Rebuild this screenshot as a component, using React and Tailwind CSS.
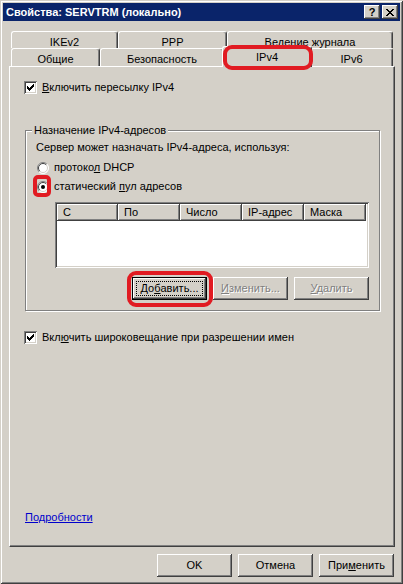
import React from "react";

const FONT = "font-['Liberation_Sans',Arial,sans-serif]";
const raised =
  "shadow-[inset_-1px_-1px_0_#404040,inset_1px_1px_0_#ffffff,inset_-2px_-2px_0_#808080,inset_2px_2px_0_#d4d0c8]";
const sunken =
  "shadow-[inset_1px_1px_0_#808080,inset_-1px_-1px_0_#ffffff,inset_2px_2px_0_#404040,inset_-2px_-2px_0_#d4d0c8]";

const CHECK = [
  [6, 0, 1],
  [5, 1, 2],
  [0, 2, 1],
  [4, 2, 3],
  [0, 3, 2],
  [3, 3, 3],
  [0, 4, 5],
  [1, 5, 3],
  [2, 6, 1],
];

const CLOSE = [
  [0, 0, 2], [6, 0, 2],
  [1, 1, 2], [5, 1, 2],
  [2, 2, 4],
  [3, 3, 2],
  [2, 4, 4],
  [1, 5, 2], [5, 5, 2],
  [0, 6, 2], [6, 6, 2],
];

function Checkbox() {
  return (
    <div className={`w-[13px] h-[13px] shrink-0 bg-white ${sunken}`}>
      <svg width="13" height="13" shapeRendering="crispEdges">
        {CHECK.map(([x, y, w], i) => (
          <rect key={i} x={x + 3} y={y + 3} width={w} height={1} fill="#000" />
        ))}
      </svg>
    </div>
  );
}

function Radio({ checked }) {
  return (
    <svg width="12" height="12" viewBox="0 0 12 12" className="shrink-0">
      <circle cx="6" cy="6" r="5.5" fill="#ffffff" />
      <path d="M2.1 9.9 A5.5 5.5 0 0 1 9.9 2.1" stroke="#808080" fill="none" />
      <path d="M9.9 2.1 A5.5 5.5 0 0 1 2.1 9.9" stroke="#ffffff" fill="none" />
      <path d="M2.8 9.2 A4.5 4.5 0 0 1 9.2 2.8" stroke="#404040" fill="none" />
      <path d="M9.2 2.8 A4.5 4.5 0 0 1 2.8 9.2" stroke="#d4d0c8" fill="none" />
      {checked && <circle cx="6" cy="6" r="2" fill="#000" />}
    </svg>
  );
}

function CapBtn({ children }) {
  return (
    <div
      className={`w-[16px] h-[14px] bg-[#d4d0c8] ${raised} flex items-center justify-center text-black font-bold text-[11px] leading-none`}
    >
      {children}
    </div>
  );
}

function Tab({ className, selected, children }) {
  return (
    <div
      className={`${className} ${
        selected ? "h-[21px] -mt-[2px] relative z-20 pt-[4px]" : "h-full pt-[4px]"
      } bg-[#d4d0c8] border-t border-l border-r border-t-white border-l-white border-r-[#404040] rounded-t-[3px] shadow-[inset_-1px_0_0_#808080] text-center whitespace-nowrap`}
    >
      {children}
    </div>
  );
}

function Btn({ children, disabled, def }) {
  if (def) {
    return (
      <div
        className={`w-[75px] h-[23px] border border-black bg-[#d4d0c8] ${raised} p-[3px]`}
      >
        <div className="w-full h-full border border-dotted border-black flex items-center justify-center">
          {children}
        </div>
      </div>
    );
  }
  return (
    <div
      className={`w-[75px] h-[23px] bg-[#d4d0c8] ${raised} flex items-center justify-center ${
        disabled ? "text-[#808080] [text-shadow:1px_1px_0_#ffffff]" : ""
      }`}
    >
      {children}
    </div>
  );
}

function HeaderCell({ className, children }) {
  return (
    <div
      className={`${className} h-full bg-[#d4d0c8] shadow-[inset_-1px_-1px_0_#404040,inset_1px_1px_0_#ffffff,inset_-2px_-2px_0_#808080] pl-[6px] flex items-center`}
    >
      {children}
    </div>
  );
}

function ListView() {
  return (
    <div className={`mt-[9px] ml-[19px] h-[66px] bg-white ${sunken} p-[2px] flex flex-col`}>
      <div className="flex h-[17px]">
        <HeaderCell className="w-[61px]">С</HeaderCell>
        <HeaderCell className="w-[62px]">По</HeaderCell>
        <HeaderCell className="w-[62px]">Число</HeaderCell>
        <HeaderCell className="w-[62px]">IP-адрес</HeaderCell>
        <HeaderCell className="w-[62px]">Маска</HeaderCell>
      </div>
    </div>
  );
}

function GroupBox() {
  return (
    <div className="relative mt-[36px] ml-[15px] w-[355px] border border-[#808080] shadow-[inset_1px_1px_0_#ffffff,1px_1px_0_#ffffff] pt-[10px] pb-[10px] pl-[10px] pr-[10px]">
      <span className="absolute -top-[7px] left-[6px] px-[2px] bg-[#d4d0c8]">
        Назначение IPv4-адресов
      </span>
      <div>Сервер может назначать IPv4-адреса, используя:</div>
      <div className="mt-[7px] flex items-center gap-[5px] pl-[1px]">
        <Radio />
        <span>
          протоко<u>л</u> DHCP
        </span>
      </div>
      <div className="mt-[6px] flex items-center gap-[5px] pl-[1px]">
        <Radio checked />
        <span>
          статический <u>п</u>ул адресов
        </span>
      </div>
      <ListView />
      <div className="mt-[9px] flex justify-end gap-[6px]">
        <Btn def>
          До<u>б</u>авить...
        </Btn>
        <Btn disabled>
          <span>
            <u>И</u>зменить...
          </span>
        </Btn>
        <Btn disabled>
          <span>
            <u>У</u>далить
          </span>
        </Btn>
      </div>
    </div>
  );
}

export default function App() {
  return (
    <div
      className={`relative w-[403px] h-[584px] overflow-hidden bg-[#d4d0c8] ${FONT} text-[11px] leading-[13px] text-black flex flex-col shadow-[inset_1px_1px_0_#d4d0c8,inset_-1px_-1px_0_#404040,inset_2px_2px_0_#ffffff,inset_-2px_-2px_0_#808080]`}
    >
      {/* Title bar */}
      <div className="mx-[3px] mt-[3px] h-[18px] bg-[#0a246a] flex items-center pl-[3px] pr-[2px]">
        <span className="text-white font-bold text-[11px]">Свойства: SERVTRM (локально)</span>
        <div className="ml-auto flex gap-[2px]">
          <CapBtn>?</CapBtn>
          <CapBtn>
            <svg width="8" height="7" shapeRendering="crispEdges">
              {CLOSE.map(([x, y, w], i) => (
                <rect key={i} x={x} y={y} width={w} height={1} fill="#000" />
              ))}
            </svg>
          </CapBtn>
        </div>
      </div>

      {/* Tabs + panel */}
      <div className="mt-[10px] ml-[9px] w-[386px] flex flex-col">
        <div className="flex pl-[2px] h-[17px]">
          <Tab className="w-[107px]">IKEv2</Tab>
          <Tab className="w-[109px]">PPP</Tab>
          <Tab className="w-[166px]">Ведение журнала</Tab>
        </div>
        <div className="flex pl-[2px] h-[18px] relative z-10">
          <Tab className="w-[89px]">Общие</Tab>
          <Tab className="w-[124px]">Безопасность</Tab>
          <Tab selected className="w-[90px] -mx-[2px]">
            IPv4
          </Tab>
          <Tab className="w-[83px]">IPv6</Tab>
        </div>
        <div className="h-[481px] border-t border-l border-r border-b border-t-white border-l-white border-r-[#404040] border-b-[#404040] shadow-[inset_-1px_-1px_0_#808080] flex flex-col">
          <div className="mt-[14px] ml-[14px] flex items-center gap-[5px]">
            <Checkbox />
            <span>
              <u>В</u>ключить пересылку IPv4
            </span>
          </div>
          <GroupBox />
          <div className="mt-[20px] ml-[14px] flex items-center gap-[5px]">
            <Checkbox />
            <span>
              Вкл<u>ю</u>чить широковещание при разрешении имен
            </span>
          </div>
          <div className="mt-auto mb-[22px] ml-[15px]">
            <span className="text-[#0000cc] underline">Подробности</span>
          </div>
        </div>
      </div>

      {/* Bottom buttons */}
      <div className="mt-[7px] pr-[9px] flex justify-end gap-[6px]">
        <Btn>OK</Btn>
        <Btn>Отмена</Btn>
        <Btn>
          <span>
            При<u>м</u>енить
          </span>
        </Btn>
      </div>

      {/* Red annotation marks */}
      <div className="absolute z-30 left-[223px] top-[45px] w-[90px] h-[25px] border-[4px] border-[#e11b22] rounded-[9px] pointer-events-none" />
      <div className="absolute z-30 left-[33px] top-[175px] w-[18px] h-[22px] border-[4px] border-[#e11b22] rounded-[5px] pointer-events-none" />
      <div className="absolute z-30 left-[127px] top-[271px] w-[86px] h-[36px] border-[4px] border-[#e11b22] rounded-[9px] pointer-events-none" />
    </div>
  );
}
